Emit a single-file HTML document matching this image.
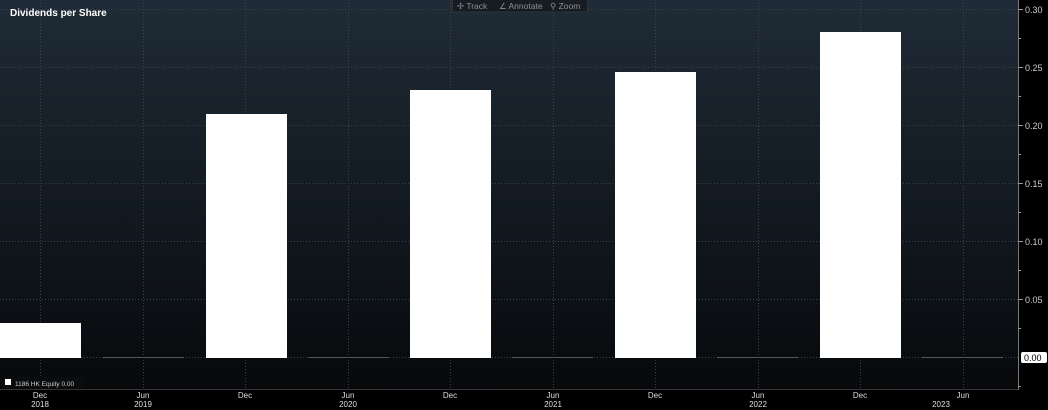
<!DOCTYPE html><html><head><style>
body{margin:0;width:1048px;height:410px;background:#000;overflow:hidden;font-family:"Liberation Sans",sans-serif;}
</style></head><body>
<svg width="1048" height="410" xmlns="http://www.w3.org/2000/svg" style="position:absolute;left:0;top:0">
<defs><linearGradient id="g" x1="0" y1="0" x2="0" y2="1"><stop offset="0" stop-color="#1f2b36"/><stop offset="0.55" stop-color="#121920"/><stop offset="1" stop-color="#07090b"/></linearGradient></defs>
<rect x="0" y="0" width="1018" height="389" fill="url(#g)"/>
<g stroke="#3a434c" stroke-width="1" stroke-dasharray="1,2">
<line x1="0" y1="9.5" x2="1018" y2="9.5"/><line x1="0" y1="67.5" x2="1018" y2="67.5"/><line x1="0" y1="125.5" x2="1018" y2="125.5"/><line x1="0" y1="183.5" x2="1018" y2="183.5"/><line x1="0" y1="241.5" x2="1018" y2="241.5"/><line x1="0" y1="299.5" x2="1018" y2="299.5"/><line x1="0" y1="357.5" x2="1018" y2="357.5"/>
<line x1="40.5" y1="0" x2="40.5" y2="389"/><line x1="143.5" y1="0" x2="143.5" y2="389"/><line x1="245.5" y1="0" x2="245.5" y2="389"/><line x1="348.5" y1="0" x2="348.5" y2="389"/><line x1="450.5" y1="0" x2="450.5" y2="389"/><line x1="553.5" y1="0" x2="553.5" y2="389"/><line x1="655.5" y1="0" x2="655.5" y2="389"/><line x1="758.5" y1="0" x2="758.5" y2="389"/><line x1="860.5" y1="0" x2="860.5" y2="389"/><line x1="963.5" y1="0" x2="963.5" y2="389"/>
</g>
<g fill="#fff">
<rect x="0" y="323" width="81" height="35"/><rect x="206" y="114" width="81" height="244"/><rect x="410" y="90" width="81" height="268"/><rect x="615" y="72" width="81" height="286"/><rect x="820" y="32" width="81" height="326"/>
</g>
<g stroke="#555" stroke-width="1">
<line x1="103" y1="357.5" x2="184" y2="357.5"/><line x1="308" y1="357.5" x2="389" y2="357.5"/><line x1="512" y1="357.5" x2="593" y2="357.5"/><line x1="717" y1="357.5" x2="798" y2="357.5"/><line x1="922" y1="357.5" x2="1003" y2="357.5"/>
</g>
<line x1="0" y1="389.5" x2="1018" y2="389.5" stroke="#333"/>
<line x1="1018.5" y1="0" x2="1018.5" y2="390" stroke="#777"/>
<g stroke="#999"><line x1="1018" y1="9.5" x2="1023" y2="9.5"/><line x1="1018" y1="67.5" x2="1023" y2="67.5"/><line x1="1018" y1="125.5" x2="1023" y2="125.5"/><line x1="1018" y1="183.5" x2="1023" y2="183.5"/><line x1="1018" y1="241.5" x2="1023" y2="241.5"/><line x1="1018" y1="299.5" x2="1023" y2="299.5"/><line x1="1018" y1="38.5" x2="1021" y2="38.5"/><line x1="1018" y1="96.5" x2="1021" y2="96.5"/><line x1="1018" y1="154.5" x2="1021" y2="154.5"/><line x1="1018" y1="212.5" x2="1021" y2="212.5"/><line x1="1018" y1="270.5" x2="1021" y2="270.5"/><line x1="1018" y1="328.5" x2="1021" y2="328.5"/><line x1="1018" y1="386.5" x2="1021" y2="386.5"/></g>
<g fill="#ccc" font-size="9">
<text x="1025" y="13">0.30</text><text x="1025" y="71">0.25</text><text x="1025" y="129">0.20</text><text x="1025" y="187">0.15</text><text x="1025" y="245">0.10</text><text x="1025" y="303">0.05</text>
</g>
<rect x="1021" y="352" width="26" height="11" rx="2" fill="#fff"/>
<text x="1024" y="361" font-size="9" fill="#000">0.00</text>
<text x="10" y="16" font-size="10" font-weight="bold" fill="#fff">Dividends per Share</text>
<rect x="452.5" y="-1" width="135" height="13" fill="#161c22" stroke="#333"/>
<g font-size="8.5" fill="#8a9098">
<text x="457" y="9">✢ Track</text><text x="499" y="9">∠ Annotate</text><text x="550" y="9">⚲ Zoom</text>
</g>
<rect x="3" y="377" width="80" height="11" fill="#0a0c0e"/>
<rect x="5" y="379" width="6" height="6" fill="#fff"/>
<text x="15" y="386" font-size="6.5" fill="#ccc">1186 HK Equity  0.00</text>
<g fill="#ddd" font-size="8" text-anchor="middle">
<text x="40" y="398">Dec</text><text x="40" y="407">2018</text>
<text x="143" y="398">Jun</text><text x="143" y="407">2019</text>
<text x="245" y="398">Dec</text>
<text x="348" y="398">Jun</text><text x="348" y="407">2020</text>
<text x="450" y="398">Dec</text>
<text x="553" y="398">Jun</text><text x="553" y="407">2021</text>
<text x="655" y="398">Dec</text>
<text x="758" y="398">Jun</text><text x="758" y="407">2022</text>
<text x="860" y="398">Dec</text>
<text x="963" y="398">Jun</text><text x="941" y="407">2023</text>
</g>
</svg>
</body></html>
